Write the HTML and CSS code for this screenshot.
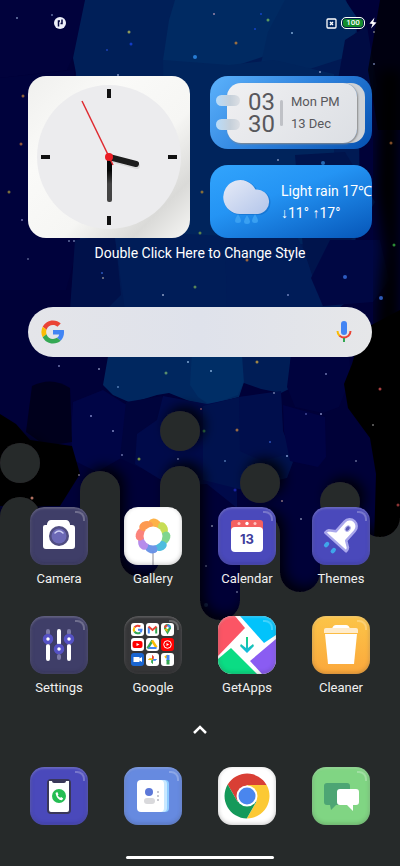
FILE: index.html
```html
<!DOCTYPE html>
<html lang="en">
<head>
    <meta charset="UTF-8">
    <meta name="viewport" content="width=device-width, initial-scale=1.0">
    <title>Home Screen</title>
    <link rel="stylesheet" href="styles.css">
</head>
<body>
    <svg class="wallpaper" viewBox="0 0 400 866" preserveAspectRatio="xMidYMin slice" aria-hidden="true">
        <defs>
            <filter id="shade" x="-20%" y="-20%" width="140%" height="140%">
                <feDropShadow dx="5" dy="-5" stdDeviation="6" flood-color="#000" flood-opacity="0.8"/>
            </filter>
            <filter id="soft"><feGaussianBlur stdDeviation="7"/></filter>
        </defs>
        <rect width="400" height="866" fill="#000138"/>
        <!-- sky cells -->
        <path d="M0 0h85l-4 40-14 30-67 8z" fill="#01023c"/>
        <path d="M86 0h260l12 34 2 180-16 90-50 40H120l-30-34-16-70 2-180z" fill="#001a54"/>
        <path d="M85 0h90l14 18-8 28-18 14 4 30-90-12-4-20z" fill="#001f58"/>
        <path d="M175 0h110l10 10-18 20-12 26-36 12-36 12-30-20 6-40z" fill="#002a62"/>
        <path d="M285 0h60l15 22-16 36-50 16-34-6 8-36z" fill="#00265e"/>
        <path d="M163 60l66 5 45-5 60 14v170H165z" fill="#00245c"/>
        <path d="M0 78l74-8 6 170-14 50H0z" fill="#00023c"/>
        <path d="M75 240l40-5 6 60-14 14H70z" fill="#00114a"/>
        <path d="M115 238l50-5 60 3 10 70-30 10-80-5z" fill="#001d58"/>
        <path d="M225 236l70-4 20 44 8 34-96 4z" fill="#001c58"/>
        <path d="M295 155l50-3 30 50-20 34-42 42-10-30z" fill="#00144c"/>
        <path d="M330 240h50l9 40-16 22-50 4-12-28z" fill="#000743"/>
        <path d="M345 40l22-14 10 60-14 36-30-14z" fill="#000b43"/>
        <path d="M110 345l-7 40 10 10 18 8 26-8 12-2 20 8 20 4 30-8 8-24-2-30z" fill="#00275f"/>
        <path d="M192 350l-2 35 8 12 12 8 28-10 9-20-5-25z" fill="#002e66"/>
        <path d="M242 355h49l-2 34-8 4-20-4-17-6z" fill="#001d56"/>
        <path d="M291 355h58l2 22-12 30-16 6-28-6-8-20z" fill="#00033e"/>
        <path d="M73 402l30-12 22 14 28 8-2 32-30 14-24 14-24-12-2-24z" fill="#000546"/>
        <path d="M126 402l36-6 8 16-4 36-26 20-20-10z" fill="#00043c"/>
        <path d="M163 396l44 8 30-6v110l-30-24-36 2-36-22 2-30 20-14z" fill="#000a4a"/>
        <path d="M203 406l36-9 42-3 2 50 10 18-6 16-34 8-10 4-40-10z" fill="#00124e"/>
        <path d="M239 397l42-6 2 40 9 22-30 8-22-10z" fill="#000e4c"/>
        <path d="M283 405l42 12 1 40-8 10-28-6-6-30z" fill="#000344"/>
        <path d="M32 386q20-10 38 2l2 54-26 4-20-14z" fill="#00001c"/>
        <path d="M380 70h20v310h-14l-10-60 8-70-8-60z" fill="#000" filter="url(#soft)"/>
        <path d="M380 0h20v130h-22l-10-60z" fill="#000" opacity="0.7"/>
        <path d="M352 364l10-34 38-20v234h-26l2-70-6-36-22-30-4-24z" fill="#000"/>
        <path d="M0 414l16 10 14 16 42 6 8 28-20 32H0z" fill="#000"/>
        <path d="M200 510h40v130h-40z" fill="#000036"/>
        <g opacity="0.8">
            <circle cx="17" cy="18" r="1" fill="#8da0c8"/><circle cx="52" cy="15" r="1" fill="#7788b8"/>
            <circle cx="129" cy="32" r="1.5" fill="#b1b85c"/><circle cx="131" cy="44" r="1.5" fill="#1842e0"/>
            <circle cx="107" cy="50" r="1" fill="#2248c8"/><circle cx="214" cy="14" r="1" fill="#c09cb8"/>
            <circle cx="261" cy="14" r="1" fill="#1848e0"/><circle cx="268" cy="20" r="1.5" fill="#70b460"/>
            <circle cx="255" cy="29" r="1" fill="#1848e0"/><circle cx="292" cy="33" r="1" fill="#9cc4f0"/>
            <circle cx="236" cy="43" r="1.5" fill="#c08038"/><circle cx="195" cy="57" r="2" fill="#3090f0"/>
            <circle cx="374" cy="32" r="1" fill="#888"/><circle cx="374" cy="64" r="1" fill="#8090c0"/>
            <circle cx="320" cy="72" r="1" fill="#a0b0d8"/><circle cx="118" cy="75" r="1" fill="#a0b0d8"/>
            <circle cx="23" cy="96" r="1.5" fill="#b07838"/><circle cx="21" cy="144" r="1.5" fill="#b06838"/>
            <circle cx="9" cy="192" r="1.5" fill="#98883c"/><circle cx="202" cy="192" r="1.5" fill="#a88030"/>
            <circle cx="22" cy="220" r="1" fill="#8888c0"/><circle cx="200" cy="233" r="1.5" fill="#709848"/>
            <circle cx="391" cy="143" r="1.5" fill="#a06030"/><circle cx="394" cy="245" r="1.5" fill="#38b040"/>
            <circle cx="278" cy="160" r="1" fill="#98a8d0"/><circle cx="323" cy="163" r="2" fill="#3080d0"/>
            <circle cx="69" cy="241" r="1" fill="#7888b8"/><circle cx="74" cy="241" r="1" fill="#7888b8"/>
            <circle cx="28" cy="259" r="1" fill="#68709c"/><circle cx="102" cy="273" r="1" fill="#3868d8"/>
            <circle cx="103" cy="278" r="1" fill="#a0a0a0"/><circle cx="195" cy="287" r="1.5" fill="#70a058"/>
            <circle cx="247" cy="260" r="1.5" fill="#c07838"/><circle cx="290" cy="251" r="1.5" fill="#c07838"/>
            <circle cx="345" cy="277" r="2" fill="#3870e0"/><circle cx="381" cy="298" r="2" fill="#3870e0"/>
            <circle cx="163" cy="295" r="1" fill="#b0c0e0"/><circle cx="288" cy="295" r="1" fill="#8898d0"/>
            <circle cx="59" cy="366" r="1" fill="#8890c8"/><circle cx="99" cy="369" r="1" fill="#a0a8d0"/>
            <circle cx="188" cy="362" r="1" fill="#a0c8f0"/><circle cx="257" cy="362" r="1.5" fill="#c8a040"/>
            <circle cx="166" cy="373" r="1.5" fill="#70a870"/><circle cx="211" cy="371" r="1" fill="#a0c8f0"/>
            <circle cx="326" cy="374" r="1" fill="#8890c8"/><circle cx="380" cy="389" r="1.5" fill="#d05050"/>
            <circle cx="118" cy="387" r="1" fill="#6890c8"/><circle cx="274" cy="393" r="1" fill="#8890b8"/>
            <circle cx="201" cy="409" r="1" fill="#b06878"/><circle cx="91" cy="416" r="1" fill="#98a0e0"/>
            <circle cx="321" cy="414" r="1" fill="#a0a8e0"/><circle cx="306" cy="414" r="1" fill="#5058a8"/>
            <circle cx="237" cy="430" r="1.5" fill="#c08040"/><circle cx="204" cy="431" r="1.5" fill="#409850"/>
            <circle cx="373" cy="425" r="1" fill="#888"/><circle cx="113" cy="431" r="1" fill="#a0a8e0"/>
            <circle cx="122" cy="455" r="1" fill="#8088c0"/><circle cx="139" cy="459" r="1.5" fill="#90b040"/>
            <circle cx="178" cy="459" r="1" fill="#98a0d0"/><circle cx="225" cy="461" r="1" fill="#6088c0"/>
            <circle cx="287" cy="456" r="1" fill="#a0b8f0"/><circle cx="270" cy="442" r="1" fill="#3860d0"/>
            <circle cx="356" cy="461" r="1" fill="#7880a8"/><circle cx="235" cy="490" r="1.5" fill="#2028b8"/>
            <circle cx="79" cy="475" r="1" fill="#9088a0"/>
            <circle cx="282" cy="501" r="1" fill="#b09090"/><circle cx="398" cy="505" r="1.5" fill="#b04040"/>
            <circle cx="212" cy="526" r="1" fill="#98a0c0"/><circle cx="301" cy="519" r="1" fill="#98a0c0"/>
            <circle cx="206" cy="566" r="1" fill="#7880a8"/><circle cx="237" cy="592" r="1" fill="#7880a8"/>
            <circle cx="206" cy="605" r="2" fill="#203868"/>
        </g>
        <!-- grey drips -->
        <g fill="#28292b" filter="url(#shade)">
            <path d="M-20 900V517h20a20 20 0 0 1 40 0v8a20 20 0 0 0 40 0V491a20 20 0 0 1 40 0v66a20 20 0 0 0 40 0V486a20 20 0 0 1 40 0v114a20 20 0 0 0 40 0v-66a20 20 0 0 1 40 0v38a20 20 0 0 0 40 0v-22a20 20 0 0 1 40 0v-33a20 20 0 0 0 40 0h20v383z"/>
            <circle cx="20" cy="463" r="20"/>
            <circle cx="180" cy="431" r="20"/>
            <circle cx="260" cy="483" r="20"/>
            <circle cx="340" cy="502" r="20"/>
        </g>
        <circle cx="32" cy="498" r="1.5" fill="#b07060"/>
    </svg>

    <header class="status">
        <svg width="14" height="14" viewBox="0 0 14 14">
            <circle cx="7" cy="7" r="6" fill="#eef0fa"/>
            <path d="M5.500 10.500V5h1.500M9 3.500v4H7.500" fill="none" stroke="#03043c" stroke-width="1.500"/>
        </svg>
        <div class="status-right">
            <svg width="11" height="11" viewBox="0 0 11 11" fill="none" stroke="#fff">
                <rect x="1" y="1" width="9" height="9" rx="1" stroke-width="1.300"/>
                <path d="M4 4l3 3M7 4L4 7" stroke-width="1.400"/>
            </svg>
            <div class="battery">100</div>
            <svg width="8" height="12" viewBox="0 0 8 12"><path d="M5.500 0.500L0.500 6.500l3 .5-1.500 4.500 5.500-6-3.200-.6z" fill="#fff"/></svg>
        </div>
    </header>

    <main>
        <section class="widgets">
            <div class="clock">
                <svg viewBox="0 0 162 162">
                    <defs><linearGradient id="hand" x1="0" y1="0" x2="0" y2="1"><stop offset="0.300" stop-color="#050505"/><stop offset="0.600" stop-color="#444"/></linearGradient></defs>
                    <circle cx="81" cy="81" r="72" fill="#ececee"/>
                    <path d="M81 13v9M81 140v9M13 81h9M140 81h9" stroke="#111" stroke-width="4"/>
                    <path d="M83 83l26 7" stroke="#bbb" stroke-width="6" stroke-linecap="round" opacity="0.400"/>
                    <path d="M81 81l27 7" stroke="#1c1c1c" stroke-width="6" stroke-linecap="round"/>
                    <rect x="79" y="81" width="5" height="45" rx="2" fill="url(#hand)"/>
                    <path d="M54 25l31 64" stroke="#df2a30" stroke-width="1.500"/>
                    <circle cx="81" cy="81" r="4" fill="#ea1c24"/>
                </svg>
            </div>
            <div class="card date-card">
                <div class="page">
                    <div class="time">03<br>30</div>
                    <div class="divider"></div>
                    <div class="day"><span>Mon PM</span><span>13 Dec</span></div>
                </div>
                <i class="ring"></i>
                <i class="ring ring-low"></i>
            </div>
            <div class="card weather-card">
                <svg width="48" height="48" viewBox="0 0 48 48">
                    <defs>
                        <linearGradient id="cloud" x1="0" y1="0" x2="1" y2="1"><stop offset="0" stop-color="#e6ebf7"/><stop offset="1" stop-color="#b3c5ea"/></linearGradient>
                    </defs>
                    <path d="M18 36a17.500 17.500 0 1 1 15-25 12.500 12.500 0 1 1 2 25z" fill="#0c5cb4" opacity="0.400" transform="translate(1 1)"/>
                    <path d="M17 36a17 17 0 1 1 15.500-24.500 12.300 12.300 0 1 1 2.500 24.500z" fill="url(#cloud)"/>
                    <path d="M15 38q-4 6 0 6t0-6zM24 39q-4 6 0 6t0-6zM32 38q-4 6 0 6t0-6z" fill="#3aa0f2" stroke="#3aa0f2" stroke-width="2"/>
                </svg>
                <div class="forecast">
                    <span>Light rain 17℃</span>
                    <span>↓11° ↑17°</span>
                </div>
            </div>
        </section>
        <p class="caption">Double Click Here to Change Style</p>

        <form class="search">
            <svg width="24" height="24" viewBox="-1 -1 50 50">
                <path fill="#ea4335" d="M24 9.500c3.500 0 6.700 1.200 9.200 3.600l6.900-6.900C35.900 2.400 30.500 0 24 0 14.600 0 6.500 5.400 2.600 13.200l8 6.200C12.400 13.700 17.700 9.500 24 9.500z"/>
                <path fill="#4285f4" d="M47 24.600c0-1.600-.2-3.100-.4-4.600H24v9h12.900c-.6 3-2.200 5.500-4.700 7.200l7.700 6c4.500-4.200 7.100-10.400 7.100-17.600z"/>
                <path fill="#fbbc05" d="M10.500 28.600a14.500 14.500 0 0 1 0-9.200l-8-6.200a24 24 0 0 0 0 21.600z"/>
                <path fill="#34a853" d="M24 48c6.500 0 11.900-2.100 15.900-5.800l-7.700-6c-2.200 1.400-4.900 2.300-8.200 2.300-6.300 0-11.600-4.200-13.500-9.900l-8 6.200C6.500 42.600 14.600 48 24 48z"/>
            </svg>
            <input type="search" aria-label="Search">
            <button type="button" aria-label="Voice search">
                <svg width="16" height="22" viewBox="0 0 16 22" fill="none">
                    <rect x="5" y="0" width="6" height="14" rx="3" fill="#4285f4"/>
                    <path d="M1.500 10q0 3 2.200 5" stroke="#fbbc05" stroke-width="2"/>
                    <path d="M3.500 14.800Q8 18.500 12.500 14.800Q14.500 13 14.500 10" stroke="#ea4335" stroke-width="2"/>
                    <path d="M8 17v4" stroke="#34a853" stroke-width="2"/>
                </svg>
            </button>
        </form>

        <nav class="apps">
            <a class="app" href="#camera">
                <div class="tile navy">
                    <svg viewBox="0 0 58 58">
                        <path d="M15 18h2v-1q1-4 4-4h15q3 0 4 4v1h2q3 0 3 3v18q0 3-3 3H16q-3 0-3-3V20q0-2 2-2z" fill="#fff"/>
                        <circle cx="29" cy="29" r="10" fill="#504d80"/>
                        <circle cx="29" cy="29" r="7.500" fill="#6c69b6"/>
                        <path d="M25 26q4-4 8 0" fill="none" stroke="#cfd0f4" stroke-width="1.500" stroke-linecap="round"/>
                    </svg>
                </div>
                <span>Camera</span>
            </a>
            <a class="app" href="#gallery">
                <div class="tile white">
                    <svg viewBox="0 0 58 58">
                        <path d="M29 44v14" stroke="#8c8c96" stroke-width="1"/>
                        <g opacity="0.950">
                            <ellipse cx="29" cy="17" rx="7" ry="5" fill="#fdae3e" transform="rotate(10 29 29) rotate(20 29 17)"/>
                            <ellipse cx="29" cy="17" rx="7" ry="5" fill="#c4dc4c" transform="rotate(55 29 29) rotate(20 29 17)"/>
                            <ellipse cx="29" cy="17" rx="7" ry="5" fill="#7ad388" transform="rotate(100 29 29) rotate(20 29 17)"/>
                            <ellipse cx="29" cy="17" rx="7" ry="5" fill="#44b9dd" transform="rotate(145 29 29) rotate(20 29 17)"/>
                            <ellipse cx="29" cy="17" rx="7" ry="5" fill="#6690e6" transform="rotate(190 29 29) rotate(20 29 17)"/>
                            <ellipse cx="29" cy="17" rx="7" ry="5" fill="#b286ea" transform="rotate(235 29 29) rotate(20 29 17)"/>
                            <ellipse cx="29" cy="17" rx="7" ry="5" fill="#fb7d74" transform="rotate(280 29 29) rotate(20 29 17)"/>
                            <ellipse cx="29" cy="17" rx="7" ry="5" fill="#fd9548" transform="rotate(325 29 29) rotate(20 29 17)"/>
                        </g>
                        <circle cx="29" cy="29" r="9.500" fill="#fff"/>
                    </svg>
                </div>
                <span>Gallery</span>
            </a>
            <a class="app" href="#calendar">
                <div class="tile indigo">
                    <svg viewBox="0 0 58 58">
                        <path d="M13 24v-8q0-3 3-3h26q3 0 3 3v8z" fill="#f4605f"/>
                        <rect x="13" y="20" width="32" height="25" rx="4" fill="#fff"/>
                        <circle cx="21" cy="16.500" r="1.500" fill="#ffc4c0"/><circle cx="29" cy="16.500" r="1.700" fill="#fff"/><circle cx="37" cy="16.500" r="1.500" fill="#ffc4c0"/>
                        <text x="29" y="37" class="date-num">13</text>
                    </svg>
                </div>
                <span>Calendar</span>
            </a>
            <a class="app" href="#themes">
                <div class="tile indigo">
                    <svg viewBox="0 0 58 58">
                        <g transform="translate(29 29) rotate(42)">
                            <path d="M-7-13a7 7 0 0 1 14 0V0l6 4q1 1 1 4h-28q0-3 1-4l6-4z" fill="#fff" stroke="#aaa8ec" stroke-width="2.500" stroke-linejoin="round"/>
                            <ellipse cx="0" cy="-10" rx="2.200" ry="3" fill="#5b59b8" stroke="#b9b8ee"/>
                            <rect x="-7" y="13" width="4" height="6" rx="2" fill="#3fa6ea"/>
                            <rect x="2" y="13" width="4" height="6" rx="2" fill="#3fa6ea"/>
                        </g>
                    </svg>
                </div>
                <span>Themes</span>
            </a>
            <a class="app" href="#settings">
                <div class="tile navy">
                    <svg viewBox="0 0 58 58">
                        <g stroke-width="4" stroke-linecap="round">
                            <path d="M18 15v2M29 40v2M39 15v2" stroke="#7c7aa6"/>
                            <path d="M18 30v13M29 15v12M39 30v13" stroke="#fff"/>
                        </g>
                        <g fill="#fff" stroke="#5551c4" stroke-width="3.500">
                            <circle cx="18" cy="23" r="3.500"/><circle cx="29" cy="33" r="3.500"/><circle cx="39" cy="23" r="3.500"/>
                        </g>
                    </svg>
                </div>
                <span>Settings</span>
            </a>
            <a class="app" href="#google">
                <div class="tile folder">
                    <svg viewBox="0 0 58 58">
                        <g fill="#fff">
                            <rect x="7" y="7" width="13" height="13" rx="3"/><rect x="22" y="7" width="13" height="13" rx="3"/><rect x="37" y="7" width="13" height="13" rx="3"/>
                            <rect x="7" y="22" width="13" height="13" rx="3"/><rect x="22" y="22" width="13" height="13" rx="3"/><rect x="37" y="22" width="13" height="13" rx="3" fill="#f00"/>
                            <rect x="7" y="37" width="13" height="13" rx="3" fill="#1a66d2"/><rect x="22" y="37" width="13" height="13" rx="3"/><rect x="37" y="37" width="13" height="13" rx="3"/>
                        </g>
                        <g fill="none" stroke-width="2">
                            <path d="M10.500 11.300a4 4 0 0 1 5.800-.7" stroke="#ea4335"/>
                            <path d="M10.500 11.300a4 4 0 0 0 0 4.400" stroke="#fbbc05"/>
                            <path d="M10.500 15.700a4 4 0 0 0 5.800.7" stroke="#34a853"/>
                            <path d="M16.300 16.400a4 4 0 0 0 1.200-2.700H14" stroke="#4285f4"/>
                            <path d="M24.800 17.500V11" stroke="#4285f4"/><path d="M32.200 17.500V11" stroke="#34a853"/>
                            <path d="M24.500 10.500l4 3.500 4-3.500" stroke="#ea4335"/>
                        </g>
                        <path d="M43.500 18.500l-3.500-6a3.600 3.600 0 1 1 7 0z" fill="#34a853"/>
                        <path d="M40 12a3.600 3.600 0 0 1 3.500-3.500v3z" fill="#ea4335"/><path d="M43.500 8.400a3.600 3.600 0 0 1 3.500 3h-3.500z" fill="#4285f4"/><path d="M40.500 13.500l3-1.500v4z" fill="#fbbc05"/>
                        <circle cx="43.500" cy="11.800" r="1.200" fill="#fff"/>
                        <rect x="8.500" y="25" width="10" height="7" rx="2" fill="#f00"/><path d="M12.500 27l3 1.500-3 1.500z" fill="#fff"/>
                        <path d="M28.500 24.500l-5 8" stroke="#34a853" stroke-width="2.500"/><path d="M28 24.500l4.500 7" stroke="#fbbc05" stroke-width="2.500"/><path d="M24.500 32h8" stroke="#4285f4" stroke-width="2.200"/>
                        <circle cx="43.500" cy="28.500" r="3.800" fill="none" stroke="#fff"/><path d="M42.500 27l2.600 1.500-2.600 1.500z" fill="#fff"/>
                        <path d="M9.500 41h6v1.500l2.500-1.500v5l-2.500-1.500V46h-6z" fill="#fff"/>
                        <path d="M28.500 43.500v-4a2.500 2.500 0 0 1 0 4z" fill="#ea4335" stroke="#ea4335"/><path d="M28.500 43.500h4a2.500 2.500 0 0 1-4 0z" fill="#4285f4" stroke="#4285f4"/>
                        <path d="M28.500 43.500v4a2.500 2.500 0 0 1 0-4z" fill="#34a853" stroke="#34a853"/><path d="M28.500 43.500h-4a2.500 2.500 0 0 1 4 0z" fill="#fbbc05" stroke="#fbbc05"/>
                        <path d="M41 41.500l3-2" stroke="#fbbc05" stroke-width="2.500"/><path d="M44 39v6" stroke="#4285f4" stroke-width="3"/><path d="M44 44v4.500" stroke="#34a853" stroke-width="3"/>
                    </svg>
                </div>
                <span>Google</span>
            </a>
            <a class="app" href="#getapps">
                <div class="tile white">
                    <svg viewBox="0 0 58 58">
                        <defs><linearGradient id="arrow" x1="0" y1="0" x2="0" y2="1"><stop offset="0" stop-color="#18d07c"/><stop offset="1" stop-color="#14b8e8"/></linearGradient></defs>
                        <path d="M0 0h17l10 12L0 40z" fill="#fb5565"/>
                        <path d="M22 0h36v19L46 27z" fill="#02c3fb"/>
                        <path d="M58 23v35H44L32 45z" fill="#8a5cf2"/>
                        <path d="M0 43l13-11 26 26H0z" fill="#0bdc84"/>
                        <path d="M28 21h2v11l5-4 1 2-7 7-7-7 1-2 5 4z" fill="url(#arrow)"/>
                    </svg>
                </div>
                <span>GetApps</span>
            </a>
            <a class="app" href="#cleaner">
                <div class="tile amber">
                    <svg viewBox="0 0 58 58" fill="#fff">
                        <path d="M20 13q1-4 4-4h10q3 0 4 4z"/>
                        <path d="M14 12h30q2 0 2 2v3H12v-3q0-2 2-2z" fill="#ffeccb"/>
                        <path d="M13 18h32l-3 30H16z"/>
                    </svg>
                </div>
                <span>Cleaner</span>
            </a>
        </nav>
    </main>

    <button class="drawer" type="button" aria-label="All apps">
        <svg width="16" height="10" viewBox="0 0 16 10" fill="none" stroke="#fff" stroke-width="2.500"><path d="M2 8l6-6 6 6"/></svg>
    </button>

    <footer>
        <nav class="apps">
            <a class="app" href="#phone" aria-label="Phone">
                <div class="tile indigo">
                    <svg viewBox="0 0 58 58">
                        <rect x="17" y="12" width="24" height="35" rx="4" fill="#393759"/>
                        <path d="M19 14h3q0 2 2 2h10q2 0 2-2h3v29q0 2-2 2H21q-2 0-2-2z" fill="#fff"/>
                        <circle cx="29" cy="29" r="7" fill="#25bd53"/>
                        <path d="M25.500 26l1.800-1 1.200 2.500-.8.800q.8 1.800 2.500 2.500l1-.8 2 1.400-1.200 1.800q-5 .3-6.500-7.200z" fill="#fff"/>
                    </svg>
                </div>
            </a>
            <a class="app" href="#contacts" aria-label="Contacts">
                <div class="tile sky">
                    <svg viewBox="0 0 58 58">
                        <rect x="20" y="13" width="25" height="32" rx="4" fill="#8ecbff"/>
                        <rect x="16" y="13" width="27" height="32" rx="4" fill="#c9e8ff"/>
                        <rect x="13" y="13" width="27" height="32" rx="4" fill="#fff"/>
                        <circle cx="25" cy="25" r="4" fill="#5c78d8"/>
                        <rect x="20" y="31" width="11" height="6" rx="3" fill="#d9d9dc"/>
                        <path d="M34 24v2M34 28v2M34 32v2" stroke="#c8c8d0" stroke-width="2"/>
                    </svg>
                </div>
            </a>
            <a class="app" href="#chrome" aria-label="Chrome">
                <div class="tile white">
                    <svg viewBox="0 0 58 58">
                        <g transform="translate(29 29)">
                            <path d="M19.600-11A22.500 22.500 0 0 0-19.350-11.500L-9.500 5.500 0-11z" fill="#d93f35"/>
                            <path d="M19.600-11A22.500 22.500 0 0 0-19.350-11.500L-9.500 5.500 0-11z" fill="#fcc934" transform="rotate(120)"/>
                            <path d="M19.600-11A22.500 22.500 0 0 0-19.350-11.500L-9.500 5.500 0-11z" fill="#15995a" transform="rotate(240)"/>
                            <circle r="10.500" fill="#fff"/>
                            <circle r="8.500" fill="#4a86ee"/>
                        </g>
                    </svg>
                </div>
            </a>
            <a class="app" href="#messages" aria-label="Messages">
                <div class="tile green">
                    <svg viewBox="0 0 58 58">
                        <path d="M15 16h20q3 0 3 3v16q0 3-3 3H24l-5 5-1-5h-3q-3 0-3-3V19q0-3 3-3z" fill="#4da574"/>
                        <path d="M28 22h16q3 0 3 3v10q0 3-3 3h-3v6l-6-6h-7q-3 0-3-3V25q0-3 3-3z" fill="#fff"/>
                    </svg>
                </div>
            </a>
        </nav>
        <div class="home-bar"></div>
    </footer>
</body>
</html>
```
FILE: styles.css
```css
* {
    box-sizing: border-box;
}
body {
    margin: 0;
    min-height: 100vh;
    display: flex;
    flex-direction: column;
    position: relative;
    overflow-x: hidden;
    background-color: #28292b;
    font-family: Roboto, "Liberation Sans", sans-serif;
    font-size: 13px;
    color: #fff;
}
svg {
    display: block;
}
a {
    color: inherit;
    text-decoration: none;
}
button {
    padding: 0;
    border: none;
    background: none;
}
.wallpaper {
    position: absolute;
    top: 0;
    left: 0;
    width: 100%;
    height: 100%;
    z-index: -1;
}

/* status bar */
.status {
    display: flex;
    justify-content: space-between;
    align-items: center;
    height: 46px;
    padding: 0 23px 0 53px;
}
.status-right {
    display: flex;
    align-items: center;
    gap: 4px;
}
.battery {
    width: 24px;
    height: 12px;
    border: 1px solid #fff;
    border-radius: 5px;
    background-color: #128c2c;
    box-shadow: inset 0 0 0 1px #06184a;
    font-size: 8px;
    font-weight: 500;
    line-height: 10px;
    text-align: center;
}

/* widgets */
.widgets {
    display: grid;
    grid-template-columns: repeat(2, minmax(0, 1fr));
    column-gap: 20px;
    row-gap: 16px;
    padding: 30px 28px 0;
}
.clock {
    grid-row: span 2;
    border-radius: 18px;
    background: linear-gradient(135deg, #f0f0ee, #fafaf8 30%, #f6f6f4 60%, #dadad8 82%, #f6f6f4);
}
.card {
    display: flex;
    position: relative;
    height: 73px;
    border-radius: 18px;
}
.date-card {
    padding: 7px 15px 6px 17px;
    background: linear-gradient(135deg, #5cb2fc, #2c80dc 50%, #0450b0);
}
.page {
    flex: 1;
    display: flex;
    align-items: center;
    padding-left: 21px;
    border-radius: 14px;
    background: linear-gradient(135deg, #f0f0f2, #dcdfe4);
    box-shadow: 1px 1px 2px #888, 8px 0 0 #cfd2d6;
    color: #58585c;
}
.time {
    font-size: 24px;
    line-height: 22px;
}
.divider {
    width: 3px;
    height: 26px;
    margin: 0 8px 0 5px;
    border-radius: 2px;
    background-color: #bfc1c6;
}
.day {
    display: flex;
    flex-direction: column;
    line-height: 22px;
    white-space: nowrap;
}
.ring {
    position: absolute;
    top: 19px;
    left: 6px;
    width: 24px;
    height: 11px;
    border-radius: 6px;
    background: linear-gradient(90deg, #b8dcfa, #c6d0da 60%, #dcdfe4);
}
.ring-low {
    top: 43px;
}
.weather-card {
    align-items: center;
    gap: 10px;
    padding-left: 13px;
    background: linear-gradient(160deg, #32a4fc, #2494f4 40%, #0656b8);
}
.forecast {
    display: flex;
    flex-direction: column;
    font-size: 14px;
    line-height: 22px;
    white-space: nowrap;
}
.caption {
    margin: 7px 0 0;
    font-size: 14px;
    line-height: 16px;
    text-align: center;
}

/* search box */
.search {
    display: flex;
    align-items: center;
    height: 50px;
    margin: 46px 28px 0;
    padding: 0 20px 0 13px;
    border-radius: 25px;
    background: linear-gradient(90deg, #e4e5e9, #dfe2eb 50%, #e6e7e9);
}
.search input {
    flex: 1;
    min-width: 0;
    border: none;
    outline: none;
    background: none;
    font: inherit;
}

/* app icons */
.apps {
    display: grid;
    grid-template-columns: repeat(4, 1fr);
    row-gap: 29px;
    padding: 0 12px;
}
main .apps {
    margin-top: 150px;
}
.app {
    display: flex;
    flex-direction: column;
    align-items: center;
    gap: 6px;
    line-height: 16px;
    color: #f0f0f0;
}
.tile {
    position: relative;
    width: 58px;
    height: 58px;
    border-radius: 14px;
    overflow: hidden;
}
.tile::before {
    content: "";
    position: absolute;
    inset: 0;
    border-radius: 14px;
    box-shadow: inset 0 2px 2px rgba(255, 255, 255, 0.15), inset 0 -2px 4px rgba(0, 0, 0, 0.12), inset 2px 0 3px rgba(140, 140, 140, 0.12), inset -2px 0 3px rgba(140, 140, 140, 0.12);
}
.tile::after {
    content: "";
    position: absolute;
    top: 4px;
    right: 3px;
    width: 8px;
    height: 8px;
    border-top: 2px solid rgba(255, 255, 255, 0.25);
    border-right: 2px solid rgba(255, 255, 255, 0.25);
    border-radius: 0 8px 0 0;
}
.navy {
    background-color: #3f3e68;
}
.indigo {
    background-color: #4a49bb;
}
.white {
    background-color: #fff;
}
.folder {
    background-color: #363638;
}
.amber {
    background: linear-gradient(#fcc548, #fba83c);
}
.sky {
    background-color: #668ae0;
}
.green {
    background-color: #80d583;
}
.date-num {
    font-family: Inter, sans-serif;
    font-size: 13px;
    font-weight: bold;
    text-anchor: middle;
    fill: #3f3e9c;
}

/* bottom */
.drawer {
    align-self: center;
    margin-top: 29px;
}
footer {
    margin-top: auto;
    padding-bottom: 7px;
}
footer .app {
    gap: 0;
}
.home-bar {
    width: 148px;
    height: 3px;
    margin: 31px auto 0;
    border-radius: 2px;
    background-color: #fff;
}
```
